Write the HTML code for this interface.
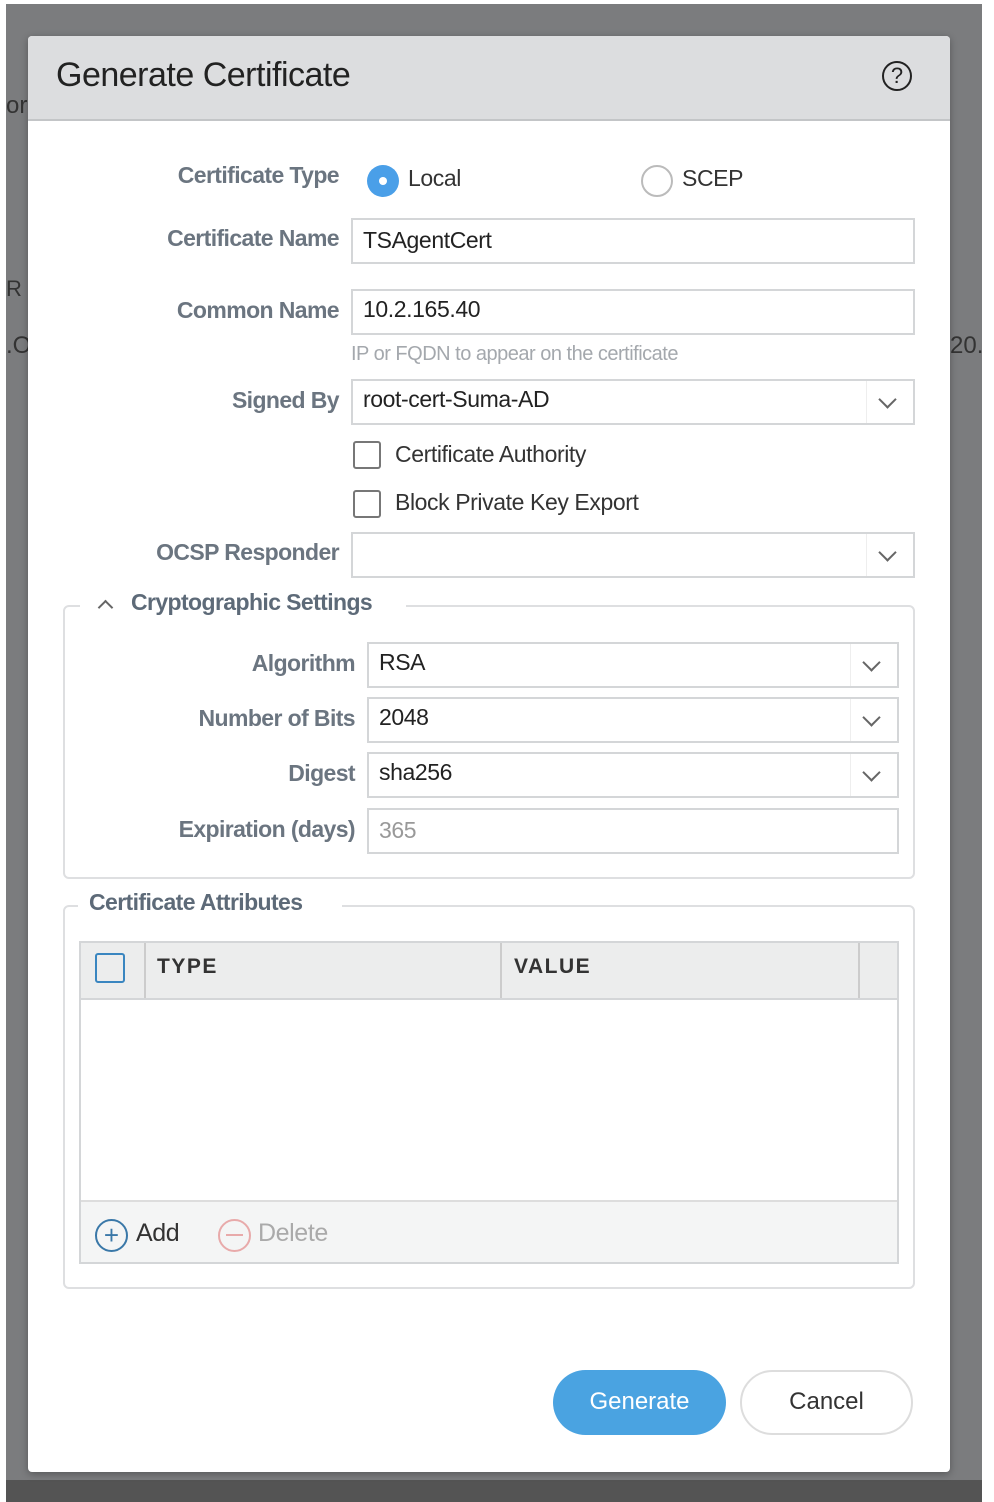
<!DOCTYPE html><html><head><style>
body{margin:0;width:994px;height:1502px;background:#7b7c7e;position:relative;overflow:hidden;font-family:"Liberation Sans",sans-serif;}
.a{position:absolute}
.lbl{position:absolute;color:#6b7580;font-size:23px;text-align:right;letter-spacing:-0.6px;font-weight:bold}
.inp{position:absolute;border:2px solid #d4d6d8;background:#fff;box-sizing:border-box;font-size:23px;color:#222;padding-left:10px;letter-spacing:-0.4px}
.chev{position:absolute;right:0;top:0;width:46px;height:100%;border-left:1px solid #eee}
.chev:after{content:"";position:absolute;left:14px;top:12px;width:11px;height:11px;border-right:2px solid #666;border-bottom:2px solid #666;transform:rotate(45deg)}
.cb{position:absolute;width:28px;height:28px;border:2px solid #777;border-radius:3px;box-sizing:border-box;background:#fff}
.t{position:absolute;font-size:23px;color:#333;letter-spacing:-0.4px}
</style></head><body>
<div class="a" style="left:0;top:0;width:6px;height:1502px;background:#fff"></div>
<div class="a" style="left:0;top:0;width:994px;height:4px;background:#fff"></div>
<div class="a" style="left:982px;top:0;width:12px;height:1502px;background:#fff"></div>
<div class="a" style="left:6px;top:1480px;width:976px;height:22px;background:#545454"></div>
<div class="a" style="left:6px;top:92px;font-size:24px;color:#333">ori</div>
<div class="a" style="left:6px;top:276px;font-size:22px;color:#333">R</div>
<div class="a" style="left:6px;top:332px;font-size:24px;color:#333">.O</div>
<div class="a" style="left:950px;top:332px;font-size:24px;color:#333">20.</div>
<div class="a" style="left:28px;top:36px;width:922px;height:1436px;background:#fff;border-radius:4px;overflow:hidden;box-shadow:0 2px 8px rgba(0,0,0,.3)">
<div class="a" style="left:0;top:0;width:922px;height:83px;background:#dcdddf;border-bottom:2px solid #c3c5c7"></div>
<div class="a" style="left:28px;top:20px;font-size:34px;color:#222;letter-spacing:-0.5px">Generate Certificate</div>
<div class="a" style="left:854px;top:25px;width:30px;height:30px;border:2.5px solid #222;border-radius:50%;box-sizing:border-box;text-align:center;font-size:22px;line-height:26px;color:#222">?</div>
</div>
<div class="lbl" style="left:60px;width:279px;top:162px">Certificate Type</div>
<div class="a" style="left:367px;top:165px;width:32px;height:32px;border-radius:50%;background:#4a9fe8"></div>
<div class="a" style="left:379px;top:177px;width:8px;height:8px;border-radius:50%;background:#fff"></div>
<div class="t" style="left:408px;top:165px">Local</div>
<div class="a" style="left:641px;top:165px;width:32px;height:32px;border-radius:50%;border:2px solid #bbb;box-sizing:border-box"></div>
<div class="t" style="left:682px;top:165px">SCEP</div>
<div class="lbl" style="left:60px;width:279px;top:225px">Certificate Name</div>
<div class="inp" style="left:351px;top:218px;width:564px;height:46px;line-height:40px">TSAgentCert</div>
<div class="lbl" style="left:60px;width:279px;top:297px">Common Name</div>
<div class="inp" style="left:351px;top:289px;width:564px;height:46px;line-height:36px">10.2.165.40</div>
<div class="a" style="left:351px;top:343px;font-size:20px;color:#a4a8ad;letter-spacing:-0.5px">IP or FQDN to appear on the certificate</div>
<div class="lbl" style="left:60px;width:279px;top:387px">Signed By</div>
<div class="inp" style="left:351px;top:379px;width:564px;height:46px;line-height:36px">root-cert-Suma-AD<div class="chev"></div></div>
<div class="cb" style="left:353px;top:441px"></div><div class="t" style="left:395px;top:441px">Certificate Authority</div>
<div class="cb" style="left:353px;top:490px"></div><div class="t" style="left:395px;top:489px">Block Private Key Export</div>
<div class="lbl" style="left:60px;width:279px;top:539px">OCSP Responder</div>
<div class="inp" style="left:351px;top:532px;width:564px;height:46px"><div class="chev"></div></div>
<div class="a" style="left:63px;top:605px;width:852px;height:274px;border:2px solid #dedfe1;border-radius:6px;box-sizing:border-box"></div>
<div class="a" style="left:80px;top:590px;width:326px;height:30px;background:#fff"></div>
<div class="a" style="left:100px;top:602px;width:9px;height:9px;border-left:2px solid #666;border-top:2px solid #666;transform:rotate(45deg)"></div>
<div class="lbl" style="left:131px;top:589px;color:#5d6a78">Cryptographic Settings</div>
<div class="lbl" style="left:80px;width:275px;top:650px">Algorithm</div>
<div class="inp" style="left:367px;top:642px;width:532px;height:46px;line-height:36px">RSA<div class="chev"></div></div>
<div class="lbl" style="left:80px;width:275px;top:705px">Number of Bits</div>
<div class="inp" style="left:367px;top:697px;width:532px;height:46px;line-height:36px">2048<div class="chev"></div></div>
<div class="lbl" style="left:80px;width:275px;top:760px">Digest</div>
<div class="inp" style="left:367px;top:752px;width:532px;height:46px;line-height:36px">sha256<div class="chev"></div></div>
<div class="lbl" style="left:80px;width:275px;top:816px">Expiration (days)</div>
<div class="inp" style="left:367px;top:808px;width:532px;height:46px;line-height:40px;color:#999">365</div>
<div class="a" style="left:63px;top:905px;width:852px;height:384px;border:2px solid #dedfe1;border-radius:6px;box-sizing:border-box"></div>
<div class="a" style="left:78px;top:888px;width:264px;height:30px;background:#fff"></div>
<div class="lbl" style="left:89px;top:889px;color:#5d6a78">Certificate Attributes</div>
<div class="a" style="left:81px;top:943px;width:816px;height:55px;background:#eceded;border-bottom:2px solid #d4d6d8"></div>
<div class="a" style="left:81px;top:1200px;width:816px;height:62px;background:#f4f5f5;border-top:2px solid #ddd"></div>
<div class="a" style="left:79px;top:941px;width:820px;height:323px;border:2px solid #d4d6d8;box-sizing:border-box"></div>
<div class="a" style="left:144px;top:943px;width:2px;height:55px;background:#ccc"></div>
<div class="a" style="left:500px;top:943px;width:2px;height:55px;background:#ccc"></div>
<div class="a" style="left:858px;top:943px;width:2px;height:55px;background:#ccc"></div>
<div class="a" style="left:95px;top:953px;width:30px;height:30px;border:2.5px solid #3a86c0;border-radius:3px;box-sizing:border-box"></div>
<div class="a" style="left:157px;top:955px;font-size:21px;font-weight:bold;color:#333;letter-spacing:1.5px">TYPE</div>
<div class="a" style="left:514px;top:955px;font-size:21px;font-weight:bold;color:#333;letter-spacing:1.5px">VALUE</div>
<div class="a" style="left:95px;top:1219px;width:33px;height:33px;border:2px solid #3a78a8;border-radius:50%;box-sizing:border-box;text-align:center;line-height:28px;font-size:26px;color:#3a78a8">+</div>
<div class="t" style="left:136px;top:1219px;font-size:25px">Add</div>
<div class="a" style="left:218px;top:1219px;width:33px;height:33px;border:2px solid #e8aaaa;border-radius:50%;box-sizing:border-box"></div>
<div class="a" style="left:226px;top:1234px;width:17px;height:2px;background:#e8aaaa"></div>
<div class="t" style="left:258px;top:1219px;font-size:25px;color:#aaa">Delete</div>
<div class="a" style="left:553px;top:1370px;width:173px;height:65px;border-radius:33px;background:#4aa3e1;color:#fff;font-size:24px;text-align:center;line-height:63px">Generate</div>
<div class="a" style="left:740px;top:1370px;width:173px;height:65px;border-radius:33px;border:2px solid #ddd;box-sizing:border-box;color:#333;font-size:24px;text-align:center;line-height:60px">Cancel</div>
</body></html>
